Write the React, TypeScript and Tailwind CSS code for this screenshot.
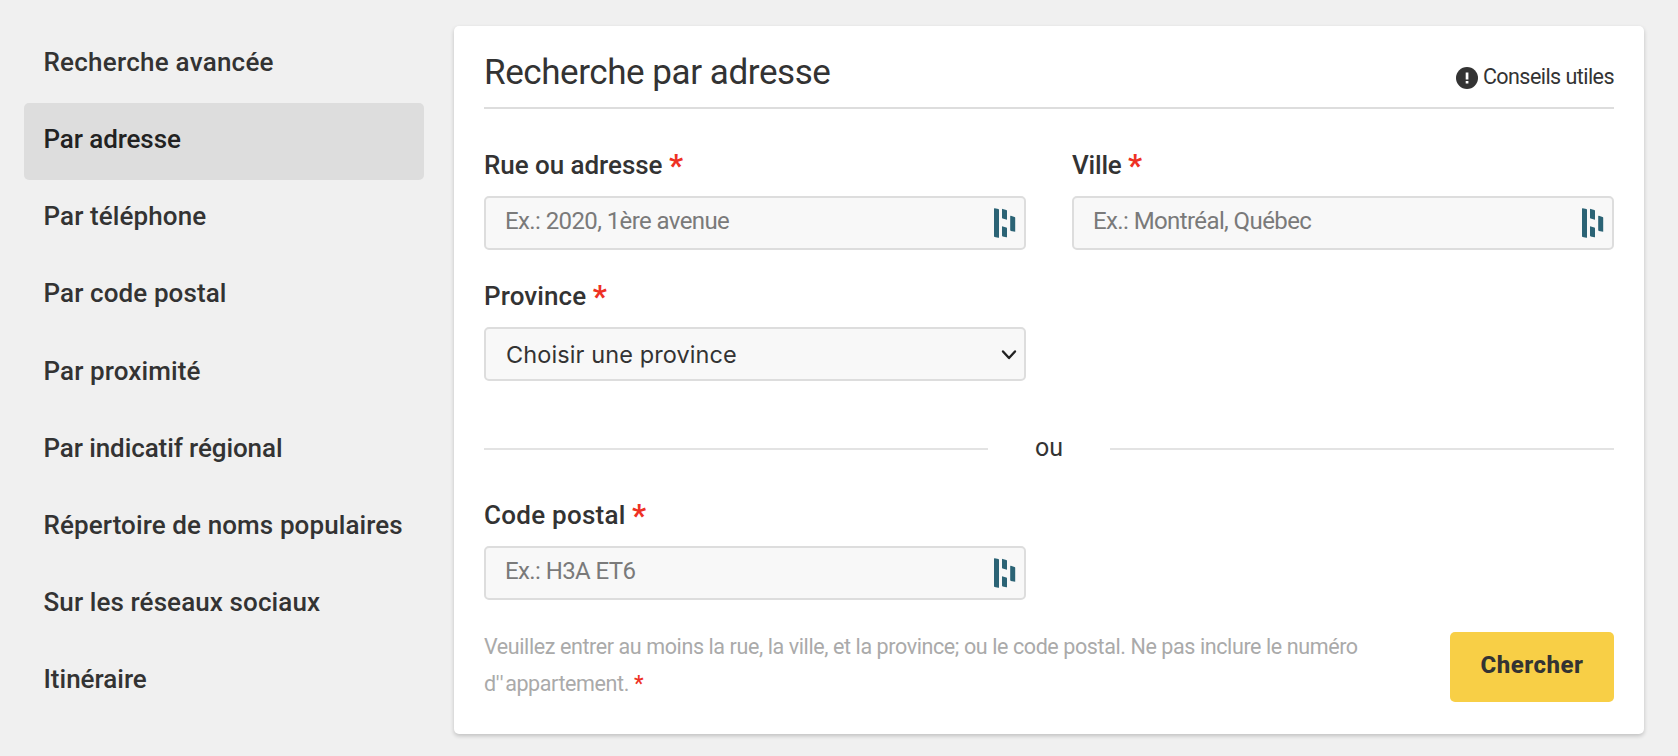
const NAV = [
  { label: 'Recherche avancée', tracking: 'tracking-[0.25px]' },
  { label: 'Par adresse', active: true, tracking: 'tracking-[-0.1px]' },
  { label: 'Par téléphone', tracking: 'tracking-[0.1px]' },
  { label: 'Par code postal', tracking: 'tracking-[0.1px]' },
  { label: 'Par proximité', tracking: 'tracking-[0.1px]' },
  { label: 'Par indicatif régional', tracking: 'tracking-[-0.1px]' },
  { label: 'Répertoire de noms populaires', tracking: 'tracking-[0.1px]' },
  { label: 'Sur les réseaux sociaux', tracking: 'tracking-[0.1px]' },
  { label: 'Itinéraire', tracking: 'tracking-[0px]' },
];

function ManagerIcon() {
  return (
    <svg width="22" height="30" viewBox="0 0 22 30" fill="#2b6375" className="mr-[8px] -mt-px shrink-0">
      <path d="M0 0.8Q0 0 .8 .2L4.3 1Q5 1.2 5 2V29.2Q5 30 4.2 29.8L.7 29Q0 28.8 0 28Z" />
      <path d="M8 1.4Q8 .7 8.7 .9L12.3 2Q13 2.2 13 3V11.8L8.6 10.6Q8 10.4 8 9.8Z" />
      <path d="M8 18.2L12.3 19.4Q13 19.6 13 20.3V28.7Q13 29.5 12.2 29.3L8.7 28.4Q8 28.2 8 27.5Z" />
      <path d="M16.2 8.3Q16.2 7.6 16.9 7.8L20.5 8.9Q21.2 9.1 21.2 9.8V23.8L16.9 22.9Q16.2 22.7 16.2 22Z" />
    </svg>
  );
}

function Label({ text, tracking }: { text: string; tracking: string }) {
  return (
    <label className={`flex h-[46px] gap-[6.5px] text-[26px] leading-[30px] font-medium ${tracking}`}>
      {text}
      <span className="pt-px text-[31px] font-bold text-[#ee3124]">*</span>
    </label>
  );
}

function Field({ label, tracking, placeholder }: { label: string; tracking: string; placeholder: string }) {
  return (
    <div className="w-[542px]">
      <Label text={label} tracking={tracking} />
      <div className="flex h-[54px] items-center rounded-[5px] border-2 border-[#dddddd] bg-[#f8f8f8] pl-[19px]">
        <input
          placeholder={placeholder}
          className="min-w-0 flex-1 bg-transparent pb-[4px] text-[24px] leading-[30px] tracking-[-0.6px] outline-none placeholder:text-[#7a7a7a]"
        />
        <ManagerIcon />
      </div>
    </div>
  );
}

export default function App() {
  return (
    <div className="flex h-[756px] w-[1678px] overflow-hidden bg-[#f0f0f0] font-['Roboto','Liberation_Sans',sans-serif] text-[#333333]">
      <nav className="ml-[24px] w-[400px] pt-[25.75px]">
        {NAV.map((item) => (
          <a
            key={item.label}
            className={`flex h-[77.2px] items-center rounded-[5px] pb-[4px] pl-[19.5px] text-[26px] font-medium whitespace-nowrap ${item.tracking} ${
              item.active ? 'bg-[#dddddd] text-[#222222]' : ''
            }`}
          >
            {item.label}
          </a>
        ))}
      </nav>

      <main className="mt-[26px] ml-[30px] h-[708px] w-[1190px] rounded-[5px] bg-white px-[30px] shadow-[0_2px_4px_rgba(0,0,0,0.2)]">
        <header className="flex h-[83px] items-start justify-between border-b-2 border-[#dddddd]">
          <h1 className="pt-[26px] text-[35px] leading-[42px] tracking-[-0.43px]">Recherche par adresse</h1>
          <a className="flex items-center gap-[5px] pt-[38px] text-[21.5px] leading-[26px] tracking-[-0.55px]">
            <svg width="22" height="22" viewBox="0 0 22 22" className="mt-[2px]">
              <circle cx="11" cy="11" r="11" fill="#333333" />
              <path d="M9.7 5.5h2.7v7h-2.7zM9.7 14h2.7v2.6h-2.7z" fill="#ffffff" />
            </svg>
            Conseils utiles
          </a>
        </header>

        <div className="flex gap-[46px] pt-[41px]">
          <Field label="Rue ou adresse" tracking="tracking-[-0.05px]" placeholder="Ex.: 2020, 1ère avenue" />
          <Field label="Ville" tracking="tracking-[-0.2px]" placeholder="Ex.: Montréal, Québec" />
        </div>

        <div className="w-[542px] pt-[31px]">
          <Label text="Province" tracking="tracking-[0.1px]" />
          <div className="flex h-[54px] items-center justify-between rounded-[5px] border-2 border-[#dddddd] bg-[#f8f8f8] pr-[7px] pl-[20px]">
            <span className="pt-px font-['Inter'] text-[23.5px] leading-[30px] tracking-[0.1px]">Choisir une province</span>
            <svg width="16" height="12" viewBox="0 0 16 12" fill="none" className="mt-px">
              <path d="M2 2.5L8 9L14 2.5" stroke="#222222" strokeWidth="2.4" strokeLinecap="round" strokeLinejoin="round" />
            </svg>
          </div>
        </div>

        <div className="flex h-[136px] items-center">
          <div className="h-[2px] w-[504px] bg-[#e3e3e3]" />
          <div className="w-[122px] pb-[3px] text-center text-[25px] leading-[30px]">ou</div>
          <div className="h-[2px] w-[504px] bg-[#e3e3e3]" />
        </div>

        <div className="-mt-[17px]">
          <Field label="Code postal" tracking="tracking-[0.25px]" placeholder="Ex.: H3A ET6" />
        </div>

        <div className="flex items-start justify-between pt-[28px]">
          <p className="w-[900px] text-[21.5px] leading-[37px] tracking-[-0.4px] whitespace-nowrap text-[#aaaaaa]">
            Veuillez entrer au moins la rue, la ville, et la province; ou le code postal. Ne pas inclure le numéro
            <br />
            d<span className="tracking-[1.5px]">''</span>appartement. <span className="font-medium text-[#ee3124]">*</span>
          </p>
          <button className="mt-[4px] h-[70px] w-[164px] rounded-[5px] bg-[#f8cf46] pb-[4px] text-[24px] font-extrabold tracking-[0.5px] text-[#333333]">
            Chercher
          </button>
        </div>
      </main>
    </div>
  );
}
